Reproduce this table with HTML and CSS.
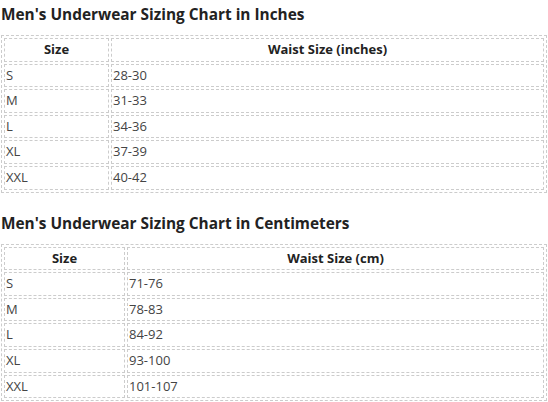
FILE: index.html
```html
<!DOCTYPE html>
<html>
<head>
<meta charset="utf-8">
<link rel="stylesheet" href="styles.css">
</head>
<body>
<h2 class="title">Men's Underwear Sizing Chart in Inches</h2>
<table class="chart chart-in">
  <thead>
    <tr><th class="col-size">Size</th><th>Waist Size (inches)</th></tr>
  </thead>
  <tbody>
    <tr><td>S</td><td>28-30</td></tr>
    <tr><td>M</td><td>31-33</td></tr>
    <tr><td>L</td><td>34-36</td></tr>
    <tr><td>XL</td><td>37-39</td></tr>
    <tr><td>XXL</td><td>40-42</td></tr>
  </tbody>
</table>
<h2 class="title">Men's Underwear Sizing Chart in Centimeters</h2>
<table class="chart chart-cm">
  <thead>
    <tr><th class="col-size">Size</th><th>Waist Size (cm)</th></tr>
  </thead>
  <tbody>
    <tr><td>S</td><td>71-76</td></tr>
    <tr><td>M</td><td>78-83</td></tr>
    <tr><td>L</td><td>84-92</td></tr>
    <tr><td>XL</td><td>93-100</td></tr>
    <tr><td>XXL</td><td>101-107</td></tr>
  </tbody>
</table>
</body>
</html>
```

FILE: styles.css
```css
html, body {
  margin: 0;
  background: #ffffff;
}
body {
  padding: 4px 1px 0 1px;
  font-family: "Open Sans", "Noto Sans", sans-serif;
  color: #444;
}
.title {
  margin: 0 0 10px 0;
  font-size: 15.4px;
  line-height: 21px;
  font-weight: 700;
  color: #222;
}
.chart {
  width: 546px;
  border: 1px dashed #ccc;
  border-collapse: separate;
  border-spacing: 2px;
  margin-bottom: 20px;
  font-size: 13px;
}
.chart th,
.chart td {
  border: 1px dashed #ccc;
  padding: 1px 1px;
  line-height: 19.6px;
  text-align: left;
  font-weight: 400;
}
.chart th {
  text-align: center;
  font-weight: 700;
  color: #222;
}
.chart-in .col-size { width: 101px; }
.chart-cm .col-size { width: 117px; }
```
